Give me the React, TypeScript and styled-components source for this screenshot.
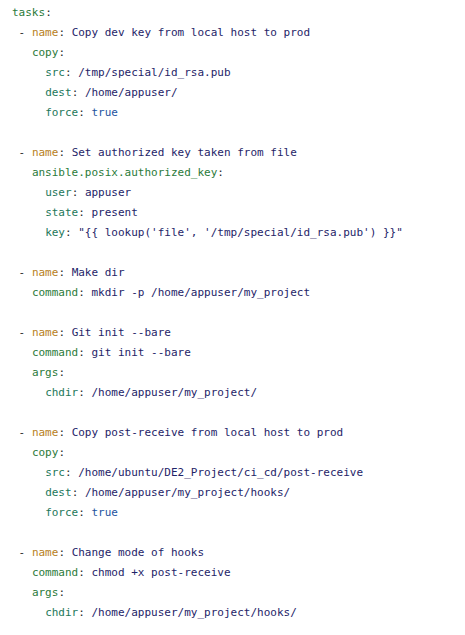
import React from "react";
import styled, { createGlobalStyle } from "styled-components";

const Global = createGlobalStyle`
  html, body { margin: 0; padding: 0; background: #ffffff; }
`;

const CodeBlock = styled.pre`
  margin: 0;
  padding: 3px 0 0 12px;
  font-family: "DejaVu Sans Mono", "Liberation Mono", monospace;
  font-size: 11px;
  line-height: 20px;
  color: #2b2b2b;
  white-space: pre;
`;

const Line = styled.div`
  height: 20px;
`;

type Kind = "top" | "name" | "key" | "sub" | "str" | "bool" | "punc";

const colors: Record<Kind, string> = {
  top: "#2b7a3a",
  name: "#b7801c",
  key: "#2b7a3a",
  sub: "#23775a",
  str: "#1e2468",
  bool: "#1d53a0",
  punc: "#2b2b2b",
};

const Tok = styled.span<{ $kind: Kind }>`
  color: ${(p) => colors[p.$kind]};
`;

type Row = { indent: number; dash?: boolean; k?: string; kind?: Kind; v?: string; vk?: Kind };

const rows: Row[] = [
  { indent: 0, k: "tasks", kind: "top" },
  { indent: 1, dash: true, k: "name", kind: "name", v: "Copy dev key from local host to prod" },
  { indent: 3, k: "copy", kind: "key" },
  { indent: 5, k: "src", kind: "sub", v: "/tmp/special/id_rsa.pub" },
  { indent: 5, k: "dest", kind: "sub", v: "/home/appuser/" },
  { indent: 5, k: "force", kind: "sub", v: "true", vk: "bool" },
  { indent: 0 },
  { indent: 1, dash: true, k: "name", kind: "name", v: "Set authorized key taken from file" },
  { indent: 3, k: "ansible.posix.authorized_key", kind: "key" },
  { indent: 5, k: "user", kind: "sub", v: "appuser" },
  { indent: 5, k: "state", kind: "sub", v: "present" },
  { indent: 5, k: "key", kind: "sub", v: "\"{{ lookup('file', '/tmp/special/id_rsa.pub') }}\"" },
  { indent: 0 },
  { indent: 1, dash: true, k: "name", kind: "name", v: "Make dir" },
  { indent: 3, k: "command", kind: "key", v: "mkdir -p /home/appuser/my_project" },
  { indent: 0 },
  { indent: 1, dash: true, k: "name", kind: "name", v: "Git init --bare" },
  { indent: 3, k: "command", kind: "key", v: "git init --bare" },
  { indent: 3, k: "args", kind: "key" },
  { indent: 5, k: "chdir", kind: "sub", v: "/home/appuser/my_project/" },
  { indent: 0 },
  { indent: 1, dash: true, k: "name", kind: "name", v: "Copy post-receive from local host to prod" },
  { indent: 3, k: "copy", kind: "key" },
  { indent: 5, k: "src", kind: "sub", v: "/home/ubuntu/DE2_Project/ci_cd/post-receive" },
  { indent: 5, k: "dest", kind: "sub", v: "/home/appuser/my_project/hooks/" },
  { indent: 5, k: "force", kind: "sub", v: "true", vk: "bool" },
  { indent: 0 },
  { indent: 1, dash: true, k: "name", kind: "name", v: "Change mode of hooks" },
  { indent: 3, k: "command", kind: "key", v: "chmod +x post-receive" },
  { indent: 3, k: "args", kind: "key" },
  { indent: 5, k: "chdir", kind: "sub", v: "/home/appuser/my_project/hooks/" },
];

export default function App() {
  return (
    <>
      <Global />
      <CodeBlock>
        {rows.map((r, i) => (
          <Line key={i}>
            {r.k ? (
              <>
                {r.dash ? " - " : " ".repeat(r.indent)}
                <Tok $kind={r.kind!}>{r.k}</Tok>
                <Tok $kind="punc">:</Tok>
                {r.v ? (
                  <>
                    {" "}
                    <Tok $kind={r.vk ?? "str"}>{r.v}</Tok>
                  </>
                ) : null}
              </>
            ) : (
              " "
            )}
          </Line>
        ))}
      </CodeBlock>
    </>
  );
}
